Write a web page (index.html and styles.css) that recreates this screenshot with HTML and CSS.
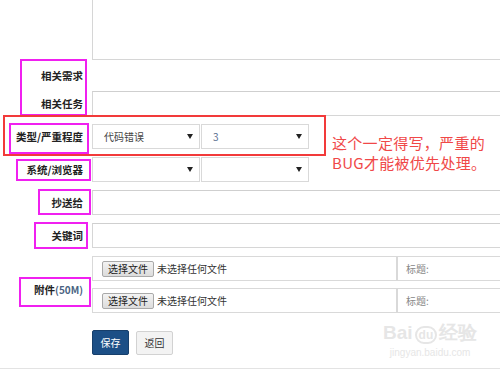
FILE: index.html
```html
<!DOCTYPE html>
<html>
<head>
<meta charset="utf-8">
<link rel="stylesheet" href="styles.css">
</head>
<body>
<div class="page">
  <div class="form">
    <div class="row row-textarea">
      <div class="label"></div>
      <div class="textarea"></div>
    </div>
    <div class="row row-plain">
      <div class="label">相关需求</div>
      <div></div>
    </div>
    <div class="row">
      <div class="label">相关任务</div>
      <div class="input"></div>
    </div>
    <div class="row">
      <div class="label">类型/严重程度</div>
      <div class="selects">
        <div class="select"><span>代码错误</span><i class="arrow"></i></div>
        <div class="select"><span class="num">3</span><i class="arrow"></i></div>
      </div>
    </div>
    <div class="row">
      <div class="label">系统/浏览器</div>
      <div class="selects">
        <div class="select"><span></span><i class="arrow"></i></div>
        <div class="select"><span></span><i class="arrow"></i></div>
      </div>
    </div>
    <div class="row">
      <div class="label">抄送给</div>
      <div class="input"></div>
    </div>
    <div class="row">
      <div class="label">关键词</div>
      <div class="input"></div>
    </div>
    <div class="row row-files">
      <div class="label">附件<span class="size">(50M)</span></div>
      <div class="files">
        <div class="file-row">
          <div class="file-cell"><span class="file-btn">选择文件</span><span class="file-name">未选择任何文件</span></div>
          <div class="title-cell">标题:</div>
        </div>
        <div class="file-row">
          <div class="file-cell"><span class="file-btn">选择文件</span><span class="file-name">未选择任何文件</span></div>
          <div class="title-cell">标题:</div>
        </div>
      </div>
    </div>
    <div class="row row-actions">
      <div class="label"></div>
      <div class="actions">
        <span class="btn btn-primary">保存</span>
        <span class="btn btn-default">返回</span>
      </div>
    </div>
    <div class="bottom-line"></div>
  </div>

  <div class="mark mark-1"></div>
  <div class="mark mark-2"></div>
  <div class="mark mark-3"></div>
  <div class="mark mark-4"></div>
  <div class="mark mark-5"></div>
  <div class="mark mark-6"></div>
  <div class="red-box"></div>
  <div class="note">这个一定得写，严重的<br>BUG才能被优先处理。</div>
  <div class="watermark"><span class="wm-big">Bai<span class="wm-du">du</span>经验</span><span class="wm-small">jingyan.baidu.com</span></div>
</div>
</body>
</html>
```

FILE: styles.css
```css
html, body {
  margin: 0;
  padding: 0;
  overflow: hidden;
  background: #fff;
}
.page {
  position: relative;
  width: 500px;
  height: 375px;
  overflow: hidden;
  font-family: "Noto Sans CJK SC", "Noto Sans", sans-serif;
  font-size: 10px;
  color: #333;
}
.form {
  display: flex;
  flex-direction: column;
  gap: 8px;
  width: 520px;
}
.row {
  display: grid;
  grid-template-columns: 92px 428px;
  align-items: center;
}
.row-textarea { height: 60px; margin-bottom: -8px; }
.row-plain { height: 31px; margin-bottom: -8px; }
.label {
  text-align: right;
  padding-right: 9px;
  font-weight: bold;
  font-size: 10.5px;
  color: #222;
  white-space: nowrap;
}
.textarea {
  height: 60px;
  box-sizing: border-box;
  border-left: 1px solid #d6d6d6;
  border-bottom: 1px solid #d6d6d6;
}
.input {
  height: 25px;
  box-sizing: border-box;
  border: 1px solid #d6d6d6;
  border-top-color: #cfcfcf;
}
.selects {
  display: flex;
  gap: 1px;
}
.select {
  width: 108px;
  height: 25px;
  box-sizing: border-box;
  border: 1px solid #d9d9d9;
  display: flex;
  align-items: center;
  justify-content: space-between;
  padding: 0 6px 0 11px;
  color: #444;
}
.select .num { color: #5a6f8f; }
.arrow {
  width: 0;
  height: 0;
  border-left: 3px solid transparent;
  border-right: 3px solid transparent;
  border-top: 5px solid #222;
}
.row-files { align-items: center; }
.row-files .label { padding-top: 10px; }
.size { color: #4a6382; font-size: 10px; }
.files {
  display: flex;
  flex-direction: column;
  gap: 7px;
}
.file-row {
  display: flex;
  height: 25px;
}
.file-cell {
  width: 306px;
  box-sizing: border-box;
  border: 1px solid #d9d9d9;
  border-right-width: 2px;
  display: flex;
  align-items: center;
  padding-left: 9px;
}
.file-btn {
  display: inline-flex;
  align-items: center;
  justify-content: center;
  width: 52px;
  height: 16px;
  box-sizing: border-box;
  border: 1px solid #a9a9a9;
  border-radius: 2px;
  background: linear-gradient(#f3f3f3, #dcdcdc);
  color: #222;
}
.file-name { margin-left: 3px; color: #333; }
.title-cell {
  flex: 1;
  box-sizing: border-box;
  border: 1px solid #d9d9d9;
  border-left: none;
  display: flex;
  align-items: center;
  padding-left: 8px;
  color: #888;
}
.row-actions { margin-top: 9px; }
.actions { display: flex; gap: 7px; align-items: center; }
.btn {
  display: inline-flex;
  align-items: center;
  justify-content: center;
  height: 25px;
  box-sizing: border-box;
  border-radius: 2px;
}
.btn-primary {
  width: 37px;
  background: #1c4f86;
  border: 1px solid #173f6b;
  color: #fff;
}
.btn-default {
  width: 37px;
  height: 24px;
  background: #f3f3f3;
  border: 1px solid #d2d2d2;
  color: #333;
}
.bottom-line {
  margin-top: 5px;
  height: 1px;
  background: #e3e3e3;
  width: 500px;
}
.mark {
  position: absolute;
  border: 2px solid #f020f0;
  box-sizing: border-box;
}
.mark-1 { left: 20px; top: 59px; width: 67px; height: 57px; }
.mark-2 { left: 9px; top: 123px; width: 80px; height: 31px; }
.mark-3 { left: 16px; top: 159px; width: 75px; height: 22px; }
.mark-4 { left: 38px; top: 189px; width: 53px; height: 26px; }
.mark-5 { left: 34px; top: 222px; width: 54px; height: 27px; }
.mark-6 { left: 19px; top: 277px; width: 72px; height: 30px; }
.red-box {
  position: absolute;
  left: 3px;
  top: 115px;
  width: 323px;
  height: 41px;
  box-sizing: border-box;
  border: 2px solid #f23a3a;
}
.note {
  position: absolute;
  left: 332px;
  top: 133px;
  font-size: 15px;
  line-height: 20px;
  color: #f04848;
  letter-spacing: 0.3px;
  white-space: nowrap;
}
.watermark {
  position: absolute;
  left: 383px;
  top: 322px;
  display: flex;
  flex-direction: column;
  align-items: center;
  color: #e6e6e6;
  font-family: "Liberation Sans", sans-serif;
}
.wm-big { font-size: 19px; font-weight: bold; line-height: 22px; }
.wm-du { border: 2px solid #e6e6e6; border-radius: 10px; font-size: 12px; padding: 0 2px; margin: 0 2px; }
.wm-small { font-size: 10px; line-height: 14px; }
```
